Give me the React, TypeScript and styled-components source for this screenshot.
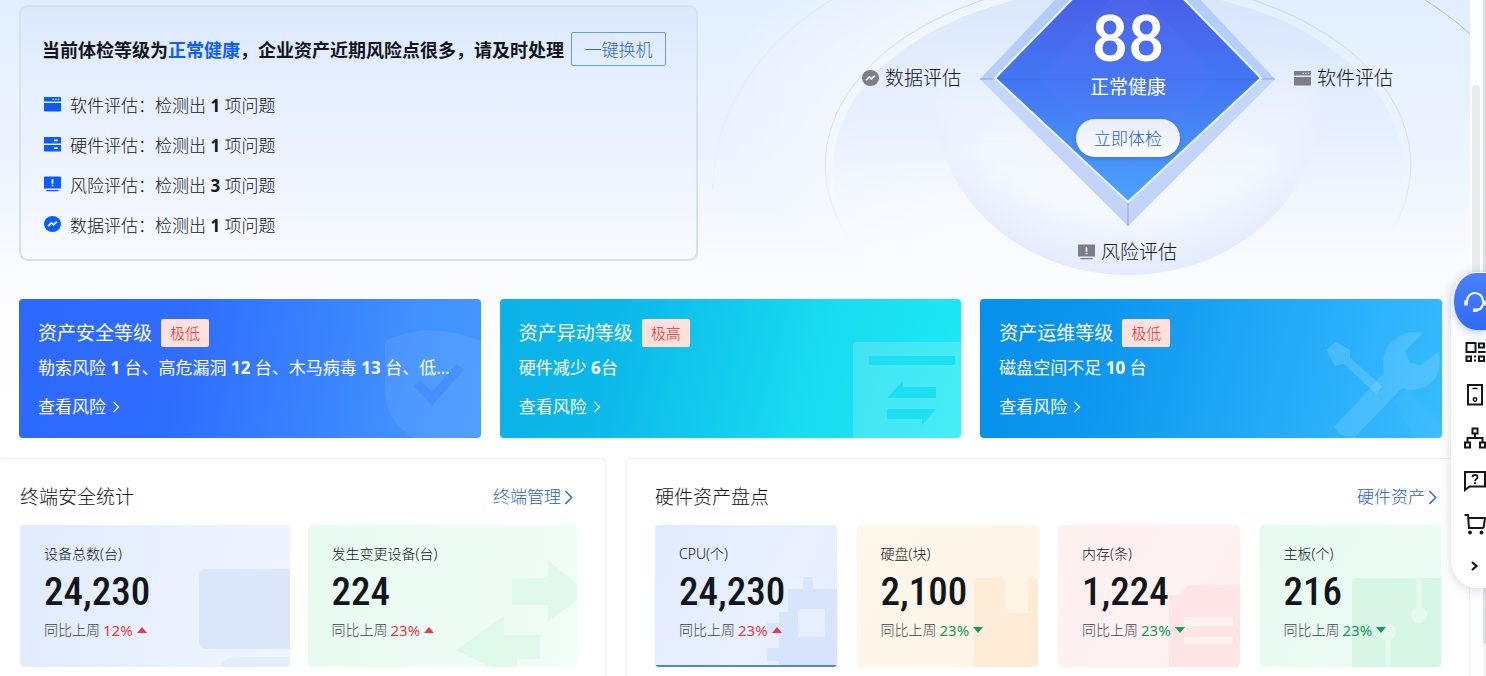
import React from 'react';
import styled, { createGlobalStyle } from 'styled-components';

const GlobalStyle = createGlobalStyle`
  *, *::before, *::after { box-sizing: border-box; }
  body {
    margin: 0;
    background: #ffffff;
    color: #12151b;
    font-family: "Noto Sans", "Noto Sans CJK SC", sans-serif;
    font-size: 17px;
    font-weight: 300;
  }
  a { color: inherit; text-decoration: none; }
  button { font: inherit; cursor: pointer; }
  ul { list-style: none; margin: 0; padding: 0; }
  h2, h3, p { margin: 0; font-weight: inherit; }
`;

const Shell = styled.div`
  display: grid;
  grid-template-columns: minmax(0, 1fr) 13px 3px;
  height: 100vh;
  overflow: hidden;
`;

const Page = styled.main`
  overflow: hidden;
  background: linear-gradient(180deg, #e2eefe 0, #ebf3ff 130px, #f8fbff 260px, #ffffff 420px);
`;

const ScrollTrack = styled.div`
  padding: 85px 3px 0 2px;
  background: #fdfdfe;
`;

const ScrollThumb = styled.div`
  height: 440px;
  border-radius: 4px;
  background: #e8eaec;
`;

const OuterTrack = styled.div`
  padding-bottom: 32px;
  background: #f3f4f7;
`;

const OuterThumb = styled.div`
  height: 100%;
  border-radius: 0 0 0 3px;
  background: #dcdee5;
`;

/* ---------- hero ---------- */

const Hero = styled.section`
  display: grid;
  grid-template-columns: 679fr 772fr;
  height: 299px;
  padding-left: 19px;
  overflow: hidden;
`;

const Summary = styled.div`
  align-self: start;
  position: relative;
  z-index: 1;
  margin-top: 5px;
  padding: 25px 21px 15px;
  border: 2px solid #d5e0f4;
  border-radius: 9px;
  background: linear-gradient(180deg, #dce9fd, #e9f1fe 45%, #f7faff);
`;

const SummaryHead = styled.div`
  display: flex;
  align-items: center;
  gap: 7px;
  height: 34px;
  font-size: 18px;
  font-weight: 700;
  white-space: nowrap;
`;

const Accent = styled.span`
  color: #0f5cff;
`;

const OutlineButton = styled.button`
  width: 95px;
  height: 34px;
  padding: 0 0 2px;
  border: 1px solid #6c9be6;
  border-radius: 2px;
  background: transparent;
  color: #2f68cc;
  font-size: 17px;
  font-weight: 300;
`;

const IssueList = styled.ul`
  margin-top: 18px;
  padding-left: 2px;
`;

const IssueItem = styled.li`
  display: flex;
  align-items: center;
  gap: 9px;
  height: 40px;
  svg { color: #0b5cff; }
`;

const Strong = styled.b`
  font-weight: 700;
`;

const Stage = styled.div`
  position: relative;
  margin-left: 88px;
`;

const Backdrop = styled.svg`
  position: absolute;
  top: 0;
  left: calc(50% - 450px);
`;

const Score = styled.div`
  position: absolute;
  top: 6px;
  left: calc(50% - 80px);
  width: 160px;
  display: flex;
  flex-direction: column;
  align-items: center;
  color: #ffffff;
`;

const ScoreValue = styled.div`
  font-family: Roboto, "Noto Sans", sans-serif;
  font-size: 64px;
  font-weight: 500;
  line-height: 68px;
`;

const ScoreLabel = styled.div`
  margin: 2px 0 21px;
  font-size: 19px;
  font-weight: 400;
  line-height: 22px;
`;

const PillButton = styled.button`
  width: 104px;
  height: 38px;
  padding: 0 0 2px;
  border: 0;
  border-radius: 19px;
  background: linear-gradient(180deg, #e9edfa, #fbfcff);
  box-shadow: 0 2px 5px rgba(36, 80, 190, 0.35);
  color: #1c62c8;
  font-size: 17px;
  font-weight: 300;
`;

const Node = styled.div<{ $x: number; $y: number }>`
  position: absolute;
  left: calc(50% + ${(p) => p.$x}px);
  top: ${(p) => p.$y}px;
  display: flex;
  align-items: center;
  gap: 6px;
  height: 28px;
  font-size: 19px;
  line-height: 28px;
  white-space: nowrap;
  svg { color: #7b7e85; }
`;

/* ---------- level cards ---------- */

const Levels = styled.section`
  display: grid;
  grid-template-columns: repeat(3, minmax(0, 1fr));
  gap: 19px;
  padding: 0 28px 0 19px;
`;

const LevelCard = styled.article<{ $bg: string }>`
  position: relative;
  display: flex;
  flex-direction: column;
  padding: 20px 19px 19px;
  border-radius: 4px;
  overflow: hidden;
  background: ${(p) => p.$bg};
  color: #ffffff;
  font-weight: 400;
`;

const LevelHead = styled.div`
  display: flex;
  align-items: center;
  gap: 9px;
  height: 28px;
`;

const LevelTitle = styled.h2`
  font-size: 19px;
  line-height: 28px;
`;

const Badge = styled.span`
  padding: 0 9px;
  border-radius: 2px;
  background: #ffe0dd;
  color: #e0302f;
  font-size: 15px;
  font-weight: 300;
  line-height: 28px;
`;

const LevelText = styled.p`
  margin: 9px 0 15px;
  line-height: 24px;
  white-space: nowrap;
`;

const LevelLink = styled.a`
  display: flex;
  align-items: center;
  gap: 6px;
  align-self: flex-start;
  line-height: 24px;
`;

const LevelArt = styled.svg`
  position: absolute;
  right: 0;
  bottom: 0;
`;

/* ---------- statistics ---------- */

const Panels = styled.section`
  display: grid;
  grid-template-columns: 303fr 422fr;
  gap: 20px;
  margin-top: 20px;
`;

const Panel = styled.div<{ $first?: boolean }>`
  height: 400px;
  padding: 24px 28px 24px ${(p) => (p.$first ? 20 : 28)}px;
  border: 1px solid #f1f2f4;
  border-left-width: ${(p) => (p.$first ? 0 : 1)}px;
  border-radius: 3px;
  background: #ffffff;
`;

const PanelHead = styled.div`
  display: flex;
  align-items: center;
  justify-content: space-between;
  height: 28px;
  margin-bottom: 14px;
`;

const PanelTitle = styled.h2`
  font-size: 19px;
  line-height: 28px;
`;

const PanelLink = styled.a`
  display: flex;
  align-items: center;
  gap: 3px;
  padding-right: 4px;
  color: #2b60cc;
  line-height: 28px;
`;

const StatGrid = styled.div<{ $columns: number; $gap: number }>`
  display: grid;
  grid-template-columns: repeat(${(p) => p.$columns}, minmax(0, 1fr));
  gap: ${(p) => p.$gap}px;
`;

const StatCard = styled.article<{ $bg: string }>`
  position: relative;
  display: flex;
  flex-direction: column;
  gap: 5px;
  height: 142px;
  padding: 18px 24px;
  border-radius: 4px;
  overflow: hidden;
  background: ${(p) => p.$bg};
`;

const ActiveBar = styled.div`
  position: absolute;
  right: 0;
  bottom: 0;
  left: 0;
  height: 2px;
  background: #5687cb;
`;

const StatLabel = styled.h3`
  position: relative;
  font-size: 14px;
  line-height: 22px;
`;

const StatValue = styled.div`
  position: relative;
  color: #12161c;
  font-family: "Roboto Condensed", Roboto, sans-serif;
  font-size: 39px;
  font-weight: 500;
  line-height: 44px;
`;

const Trend = styled.p`
  position: relative;
  display: flex;
  align-items: center;
  gap: 3px;
  color: #3d424c;
  font-size: 14px;
  line-height: 22px;
`;

const TrendValue = styled.span<{ $up?: boolean }>`
  display: flex;
  align-items: center;
  gap: 4px;
  color: ${(p) => (p.$up ? '#e63a3f' : '#0f9f58')};
  font-size: 15px;
  font-weight: 400;
`;

const StatArt = styled.svg`
  position: absolute;
  right: 0;
  bottom: 0;
`;

/* ---------- floating dock ---------- */

const Dock = styled.nav`
  position: fixed;
  top: 272px;
  right: 0;
  display: flex;
  flex-direction: column;
  align-items: flex-end;
  width: 35px;
  padding-top: 1px;
  border-radius: 25px 0 0 25px / 30px 0 0 30px;
  background: #ffffff;
  box-shadow: 0 2px 12px rgba(60, 70, 110, 0.2);
`;

const DockPrimary = styled.button`
  display: flex;
  align-items: center;
  justify-content: flex-end;
  width: 32px;
  height: 57px;
  padding: 0;
  border: 0;
  border-radius: 22px 0 0 22px / 28px 0 0 28px;
  background: linear-gradient(180deg, #4a80fb, #2f6bf5);
  box-shadow: 0 3px 8px rgba(60, 110, 240, 0.35);
  color: #ffffff;
`;

const DockButton = styled.button`
  display: flex;
  align-items: center;
  justify-content: flex-end;
  width: 35px;
  height: 43px;
  padding: 0;
  border: 0;
  background: transparent;
  color: #16161f;
`;

/* ---------- icons ---------- */

type EvalKind = 'software' | 'hardware' | 'risk' | 'data';

const EvalIcon = ({ kind }: { kind: EvalKind }) => (
  <svg width="17" height="16" viewBox="0 0 16 16" preserveAspectRatio="none" fill="currentColor" aria-hidden="true">
    {kind === 'software' && (
      <path fillRule="evenodd" d="M.5 1h15l.5.5V5.500H0V1.500zM0 6.900h16V15l-.5.500H.5L0 15zM8 2.800v1.100h1.300V2.800zm2.500 0v1.100h1.300V2.800zm2.500 0v1.100h1.300V2.800z" />
    )}
    {kind === 'hardware' && (
      <path fillRule="evenodd" d="M.5 1h15l.5.500v5.900H0V1.500zM0 8.900h16v6l-.5.500H.5l-.5-.5zM9.500 3.400v1.800H13V3.400zM9.500 11.300v1.800H13v-1.800z" />
    )}
    {kind === 'risk' && (
      <path fillRule="evenodd" d="M.5.5h15L16 1v11.500H0V1zM2.200 13.900h11.600v1.400H2.200zM7.200 3v4.700h1.600V3zm0 5.800v1.500h1.600V8.800z" />
    )}
    {kind === 'data' && (
      <>
        <circle cx="8" cy="8" r="8" />
        <path d="M3.800 10.300l3.100-3.400 1.900 1.900 3.400-3.200" fill="none" stroke="#fff" strokeWidth="1.700" />
      </>
    )}
  </svg>
);

const Chevron = ({ width, height }: { width: number; height: number }) => (
  <svg width={width} height={height} viewBox="0 0 8 14" fill="none" stroke="currentColor" strokeWidth="1.300" aria-hidden="true">
    <path d="M1 1l6 6-6 6" />
  </svg>
);

const Triangle = ({ up }: { up?: boolean }) => (
  <svg width="10" height="6" viewBox="0 0 10 6" fill="currentColor" aria-hidden="true">
    <path d={up ? 'M5 0l5 6H0z' : 'M0 0h10L5 6z'} />
  </svg>
);

const dockIcons: { label: string; icon: React.ReactNode }[] = [
  {
    label: '应用',
    icon: (
      <g fill="none" stroke="currentColor" strokeWidth="2">
        <path d="M2.500 2h9v9h-9zM15 2.500h5v4h-5zM2.500 15.500H7v4.500H2.500zM15 15.500h5v4.500h-5z" />
        <path d="M14 11h7.500M11 14.500v2M11 18.500v2" />
      </g>
    ),
  },
  {
    label: '设备',
    icon: (
      <g fill="none" stroke="currentColor" strokeWidth="2">
        <path d="M4 1h14v19.500H4z" />
        <path d="M8.500 4.500h5" strokeWidth="1.500" />
        <circle cx="11" cy="15.500" r="1.700" strokeWidth="1.500" />
      </g>
    ),
  },
  {
    label: '组织',
    icon: (
      <g fill="none" stroke="currentColor" strokeWidth="2">
        <path d="M8.500 1.500h5v5h-5zM1 15.500h5v5H1zM16 15.500h5v5h-5z" />
        <path d="M11 6.500V11M3.500 15.500V11h15v4.500" />
      </g>
    ),
  },
  {
    label: '帮助',
    icon: (
      <g fill="none" stroke="currentColor" strokeWidth="2">
        <path d="M1 2h20v14.500H5.500L1 20z" />
        <path d="M8.500 7.200c0-3.200 5-3.200 5 0 0 1.800-2.500 1.800-2.500 4M11 12.300v1.700" strokeWidth="1.800" />
      </g>
    ),
  },
  {
    label: '采购',
    icon: (
      <g fill="none" stroke="currentColor" strokeWidth="2">
        <path d="M.5 2H4l1 13h14.500M4.300 5H21l-1.500 10" />
        <circle cx="6" cy="19.500" r="1.900" fill="currentColor" stroke="none" />
        <circle cx="17.500" cy="19.500" r="1.900" fill="currentColor" stroke="none" />
      </g>
    ),
  },
  {
    label: '展开',
    icon: <path d="M8 6l4.500 4L8 14" fill="none" stroke="currentColor" strokeWidth="2.200" />,
  },
];

/* ---------- data ---------- */

const issues: { kind: EvalKind; name: string; count: number }[] = [
  { kind: 'software', name: '软件评估', count: 1 },
  { kind: 'hardware', name: '硬件评估', count: 1 },
  { kind: 'risk', name: '风险评估', count: 3 },
  { kind: 'data', name: '数据评估', count: 1 },
];

const levels = [
  {
    title: '资产安全等级',
    badge: '极低',
    bg: 'linear-gradient(100deg, #2c68fd 0%, #2f6dff 35%, #4192ff 85%, #4498ff 100%)',
    text: (
      <>
        勒索风险 <Strong>1</Strong> 台、高危漏洞 <Strong>12</Strong> 台、木马病毒 <Strong>13</Strong> 台、低...
      </>
    ),
    art: (
      <>
        <path d="M24 16q0-4 4-5Q50 3 66 2q30 0 60 14v94H52Q24 92 24 62z" fill="#fff" opacity=".07" />
        <path d="M56 55l15 16 28-32" fill="none" stroke="#2f7cf5" strokeWidth="9" opacity=".3" />
      </>
    ),
  },
  {
    title: '资产异动等级',
    badge: '极高',
    bg: 'linear-gradient(105deg, #0bb1e8 0%, #0cb8e9 25%, #18dcf0 68%, #1feaf5 100%)',
    text: (
      <>
        硬件减少 <Strong>6</Strong>台
      </>
    ),
    art: (
      <>
        <path d="M12 110V18q0-4 4-4h104v96z" fill="#fff" opacity=".18" />
        <path d="M28 28h86v9H28zM46 70l16-17v6h33v11zM46 81h49L81 97v-6H46z" fill="#12dbef" opacity=".75" />
      </>
    ),
  },
  {
    title: '资产运维等级',
    badge: '极低',
    bg: 'linear-gradient(105deg, #078fec 0%, #0c96ee 25%, #28aefa 72%, #38bcff 100%)',
    text: (
      <>
        磁盘空间不足 <Strong>10</Strong> 台
      </>
    ),
    art: (
      <>
        <path d="M4 22l10-8 14 8v8l32 28-6 8-32-30-9 2z" fill="#fff" opacity=".15" />
        <path d="M72 72l14-12 34 35v15H92z" fill="#fff" opacity=".03" />
        <path d="M101 5Q85 1 72 12q-14 12-10 33L12 99q6 11 20 11l48-50q20 5 32-8 9-13 4-28l-17 13-11-2-5-12z" fill="#fff" opacity=".13" />
      </>
    ),
  },
];

interface Stat {
  label: string;
  value: string;
  change: string;
  up?: boolean;
  active?: boolean;
  bg: string;
  art: React.ReactNode;
}

const terminalStats: Stat[] = [
  {
    label: '设备总数(台)',
    value: '24,230',
    change: '12%',
    up: true,
    bg: 'linear-gradient(100deg, #e0ebfe, #e9f1ff 55%, #f0f5ff)',
    art: (
      <g fill="#cfdff7">
        <path d="M46 12h84v80H46q-7 0-7-7V19q0-7 7-7z" opacity=".6" />
        <path d="M60 110q4-10 20-10h50v10z" opacity=".35" />
      </g>
    ),
  },
  {
    label: '发生变更设备(台)',
    value: '224',
    change: '23%',
    up: true,
    bg: 'linear-gradient(100deg, #e8fbf1, #edfcf4 55%, #f1fdf7)',
    art: (
      <path d="M65 21h36V3l29 24v16l-29 22V48H65zM9 93l48-34v19h36v24H70v8H44z" fill="#d3f5e1" opacity=".55" />
    ),
  },
];

const hardwareStats: Stat[] = [
  {
    label: 'CPU(个)',
    value: '24,230',
    change: '23%',
    up: true,
    active: true,
    bg: 'linear-gradient(120deg, #dfebff, #e9f1ff 60%, #e4edff)',
    art: (
      <path
        fillRule="evenodd"
        d="M81 32h15V20h10v12h24v78H72v-6H60V91h12V77H60V66h12V55h9zM91 52v28h27V52z"
        fill="#cddefa"
        opacity=".6"
      />
    ),
  },
  {
    label: '硬盘(块)',
    value: '2,100',
    change: '23%',
    bg: 'linear-gradient(120deg, #fef7ea, #fff6e9 60%, #fff4e5)',
    art: <path d="M70 21h27v28q0 7 7 7h16V21h10v89H66V25q0-4 4-4z" fill="#ffe6cc" opacity=".65" />,
  },
  {
    label: '内存(条)',
    value: '1,224',
    change: '23%',
    bg: 'linear-gradient(120deg, #fff0f0, #fff2f2 60%, #ffefef)',
    art: (
      <>
        <path d="M59 38h10l9-10h52v82H59z" fill="#ffdcde" opacity=".6" />
        <path d="M74 60h49v9H74zM74 80h49v7H74z" fill="#fff2f2" />
      </>
    ),
  },
  {
    label: '主板(个)',
    value: '216',
    change: '23%',
    bg: 'linear-gradient(120deg, #e6faef, #ecfcf4 60%, #e6fbf1)',
    art: (
      <>
        <path d="M45 21h85v89H41V25q0-4 4-4z" fill="#ccf3dd" opacity=".65" />
        <path d="M108 21v37M77 75v35" stroke="#e4faee" strokeWidth="5" />
        <circle cx="108" cy="58" r="8" fill="#e4faee" />
        <circle cx="77" cy="75" r="8" fill="#e4faee" />
      </>
    ),
  },
];

const Stats = ({ items, gap }: { items: Stat[]; gap: number }) => (
  <StatGrid $columns={items.length} $gap={gap}>
    {items.map((s) => (
      <StatCard key={s.label} $bg={s.bg}>
        <StatArt width="130" height="110" viewBox="0 0 130 110" aria-hidden="true">
          {s.art}
        </StatArt>
        <StatLabel>{s.label}</StatLabel>
        <StatValue>{s.value}</StatValue>
        <Trend>
          同比上周
          <TrendValue $up={s.up}>
            {s.change}
            <Triangle up={s.up} />
          </TrendValue>
        </Trend>
        {s.active && <ActiveBar />}
      </StatCard>
    ))}
  </StatGrid>
);

const DiamondBackdrop = () => (
  <Backdrop width="900" height="299" viewBox="0 0 900 299" fill="none" aria-hidden="true">
    <defs>
      <radialGradient id="halo">
        <stop offset=".5" stopColor="#ffffff" stopOpacity=".5" />
        <stop offset="1" stopColor="#ffffff" stopOpacity="0" />
      </radialGradient>
      <linearGradient id="disc" x1="0" y1="0" x2="0" y2="1">
        <stop offset="0" stopColor="#d3e3fc" stopOpacity=".8" />
        <stop offset=".4" stopColor="#e2ecfe" stopOpacity=".6" />
        <stop offset=".7" stopColor="#f6f9ff" stopOpacity="0" />
      </linearGradient>
      <radialGradient id="ball" cx=".5" cy=".4" r=".62">
        <stop offset="0" stopColor="#f6f9ff" />
        <stop offset=".7" stopColor="#f4f8ff" />
        <stop offset="1" stopColor="#e0e9fd" />
      </radialGradient>
      <linearGradient id="ballFade" x1="0" y1="0" x2="0" y2="1">
        <stop offset=".3" stopColor="#000000" />
        <stop offset=".75" stopColor="#ffffff" />
      </linearGradient>
      <mask id="ballMask">
        <path d="M0-67h900v366H0z" fill="url(#ballFade)" />
      </mask>
      <linearGradient id="ringFade" x1="0" y1="0" x2="0" y2="1">
        <stop offset="0" stopColor="#c3cfe1" stopOpacity=".8" />
        <stop offset=".5" stopColor="#cfd8e7" stopOpacity=".7" />
        <stop offset=".72" stopColor="#d5dfee" stopOpacity="0" />
      </linearGradient>
      <linearGradient id="outerFade" x1="0" y1="0" x2="1" y2="0">
        <stop offset="0" stopColor="#c9d6ea" stopOpacity=".25" />
        <stop offset=".3" stopColor="#c3d2ea" stopOpacity=".8" />
        <stop offset="1" stopColor="#a9b9d2" />
      </linearGradient>
      <linearGradient id="face" x1="0" y1="0" x2="0" y2="1">
        <stop offset=".2" stopColor="#4a5fe9" />
        <stop offset=".55" stopColor="#4377f4" />
        <stop offset="1" stopColor="#4aa2fc" />
      </linearGradient>
      <linearGradient id="rim" x1="0" y1="0" x2="0" y2="1">
        <stop offset=".2" stopColor="#b0cdf8" />
        <stop offset=".5" stopColor="#b8cffb" />
        <stop offset="1" stopColor="#b0c5f7" />
      </linearGradient>
    </defs>
    <path d="M35 190C35 40 200-72 450-72S865 40 865 190" stroke="url(#outerFade)" />
    <ellipse cx="340" cy="110" rx="300" ry="190" fill="url(#halo)" />
    <ellipse cx="440" cy="168" rx="285" ry="180" fill="url(#disc)" />
    <ellipse cx="440" cy="165" rx="293" ry="186" stroke="url(#ringFade)" />
    <ellipse cx="450" cy="104" rx="192" ry="171" fill="url(#ball)" mask="url(#ballMask)" />
    <path d="M450-77L597 79 450 226 302 79z" fill="url(#rim)" />
    <path d="M302 79h295L450 226z" fill="#cfdcfc" opacity=".6" />
    <path d="M450-58L583 78 450 202 317 78z" fill="url(#face)" />
    <path d="M450-20L540 79 450 165 360 79z" fill="#6a7bf5" opacity=".12" />
    <path d="M317 79h266" stroke="#2c5fd8" opacity=".4" />
    <path d="M302 79h15M583 79h14M450 203v23" stroke="#7f9be0" opacity=".8" />
    <path d="M450-58L583 78 450 202 317 78z" stroke="#e9f6ff" strokeWidth="2" />
  </Backdrop>
);

export default function App() {
  return (
    <>
      <GlobalStyle />
      <Shell>
        <Page>
          <Hero>
            <Summary>
              <SummaryHead>
                <span>
                  当前体检等级为<Accent>正常健康</Accent>，企业资产近期风险点很多，请及时处理
                </span>
                <OutlineButton type="button">一键换机</OutlineButton>
              </SummaryHead>
              <IssueList>
                {issues.map((i) => (
                  <IssueItem key={i.kind}>
                    <EvalIcon kind={i.kind} />
                    <span>
                      {i.name}：检测出 <Strong>{i.count}</Strong> 项问题
                    </span>
                  </IssueItem>
                ))}
              </IssueList>
            </Summary>
            <Stage>
              <DiamondBackdrop />
              <Score>
                <ScoreValue>88</ScoreValue>
                <ScoreLabel>正常健康</ScoreLabel>
                <PillButton type="button">立即体检</PillButton>
              </Score>
              <Node $x={-266} $y={64}>
                <EvalIcon kind="data" />
                数据评估
              </Node>
              <Node $x={166} $y={64}>
                <EvalIcon kind="software" />
                软件评估
              </Node>
              <Node $x={-50} $y={238}>
                <EvalIcon kind="risk" />
                风险评估
              </Node>
            </Stage>
          </Hero>

          <Levels>
            {levels.map((l) => (
              <LevelCard key={l.title} $bg={l.bg}>
                <LevelArt width="120" height="110" viewBox="0 0 120 110" aria-hidden="true">
                  {l.art}
                </LevelArt>
                <LevelHead>
                  <LevelTitle>{l.title}</LevelTitle>
                  <Badge>{l.badge}</Badge>
                </LevelHead>
                <LevelText>{l.text}</LevelText>
                <LevelLink href="#risk">
                  查看风险
                  <Chevron width={8} height={12} />
                </LevelLink>
              </LevelCard>
            ))}
          </Levels>

          <Panels>
            <Panel $first>
              <PanelHead>
                <PanelTitle>终端安全统计</PanelTitle>
                <PanelLink href="#terminal">
                  终端管理
                  <Chevron width={9} height={15} />
                </PanelLink>
              </PanelHead>
              <Stats items={terminalStats} gap={18} />
            </Panel>
            <Panel>
              <PanelHead>
                <PanelTitle>硬件资产盘点</PanelTitle>
                <PanelLink href="#hardware">
                  硬件资产
                  <Chevron width={9} height={15} />
                </PanelLink>
              </PanelHead>
              <Stats items={hardwareStats} gap={20} />
            </Panel>
          </Panels>
        </Page>
        <ScrollTrack>
          <ScrollThumb />
        </ScrollTrack>
        <OuterTrack>
          <OuterThumb />
        </OuterTrack>
      </Shell>

      <Dock>
        <DockPrimary type="button" aria-label="客服">
          <svg width="22" height="22" viewBox="0 0 22 22" fill="none" stroke="currentColor" strokeWidth="2.200" aria-hidden="true">
            <path d="M3 10.500V10a8 8 0 0 1 16 0v.5M18.500 14q-1 5-6.500 5" />
            <path d="M2 9.500v5M20 9.500v5M9 19.300h4.500" strokeWidth="3.500" />
          </svg>
        </DockPrimary>
        {dockIcons.map((d) => (
          <DockButton key={d.label} type="button" aria-label={d.label}>
            <svg width="22" height="22" viewBox="0 0 22 22" aria-hidden="true">
              {d.icon}
            </svg>
          </DockButton>
        ))}
      </Dock>
    </>
  );
}
